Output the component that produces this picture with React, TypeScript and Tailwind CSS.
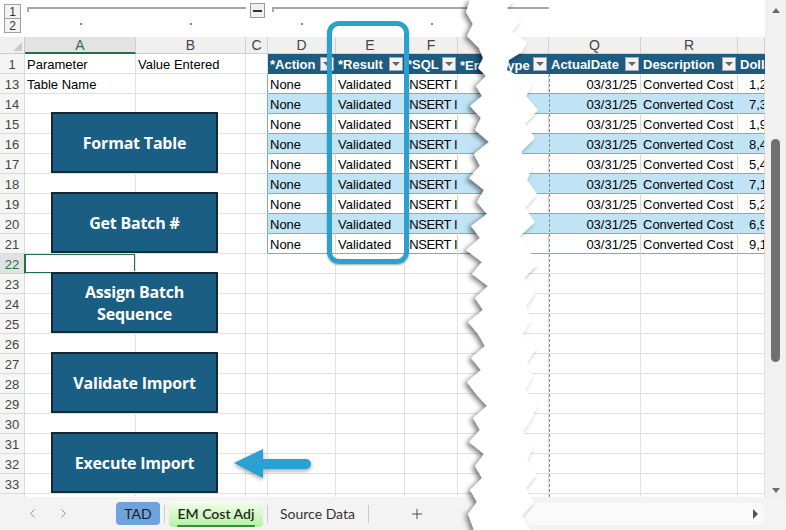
import { ChevronLeft, ChevronRight, Plus } from 'lucide-react'

// column template shared by the outline bar, the column letters and the rows
const GRID = 'grid grid-cols-[25px_111px_110px_22px_68px_69px_53px_91px_92px_97px_27px]'

const rows = [1, 13, 14, 15, 16, 17, 18, 19, 20, 21, 22, 23, 24, 25, 26, 27, 28, 29, 30, 31, 32, 33, 34]

const amounts: Record<number, string> = {
  13: '1,284.50',
  14: '7,310.00',
  15: '1,905.25',
  16: '8,442.10',
  17: '5,467.80',
  18: '7,125.00',
  19: '5,298.40',
  20: '6,973.15',
  21: '9,150.60',
}

const buttons = ['Format Table', 'Get Batch #', 'Assign Batch Sequence', 'Validate Import', 'Execute Import']

// torn paper edge, left side top->bottom, right side bottom->top
const leftEdge = [
  [470, 0], [466, 12], [473, 24], [467, 36], [479, 48], [483, 58], [478, 68], [486, 76], [476, 86], [482, 96],
  [470, 106], [481, 118], [475, 130], [489, 142], [474, 154], [480, 166], [469, 178], [484, 190], [477, 202],
  [487, 214], [471, 226], [480, 238], [466, 250], [482, 262], [472, 274], [488, 286], [475, 298], [483, 310],
  [468, 322], [478, 334], [485, 346], [471, 358], [481, 370], [467, 382], [476, 394], [487, 406], [473, 418],
  [480, 430], [469, 442], [484, 454], [475, 466], [482, 478], [470, 490], [477, 502], [468, 514], [474, 530],
]
const rightEdge = [
  [530, 530], [522, 516], [534, 502], [526, 488], [537, 474], [527, 460], [535, 446], [523, 432], [532, 418],
  [538, 404], [525, 390], [533, 376], [527, 362], [537, 348], [523, 334], [531, 320], [526, 306], [536, 292],
  [524, 278], [538, 264], [529, 250], [520, 236], [535, 222], [525, 208], [537, 194], [527, 180], [533, 166],
  [521, 152], [535, 138], [525, 124], [538, 110], [526, 96], [533, 84], [519, 76], [507, 70], [509, 60],
  [522, 52], [527, 42], [512, 32], [521, 20], [507, 8], [516, 0],
]
const tearPath =
  'M' + [...leftEdge, ...rightEdge].map(([x, y]) => `${x} ${y}`).join(' L') + ' Z'

const Drop = () => (
  <span className="ml-auto mr-[2px] flex h-[14px] w-[14px] shrink-0 items-center justify-center border border-[#A6A6A6] bg-[#F2F2F2]">
    <span className="h-0 w-0 border-x-[4px] border-t-[4px] border-x-transparent border-t-[#666]" />
  </span>
)

const Head = ({ label, drop = true }: { label: string; drop?: boolean }) => (
  <div className="flex h-[20px] items-center overflow-hidden whitespace-nowrap border-b border-[#1D5B80] bg-[#1D5B80] pl-[2px] text-[13px] font-bold text-white">
    <span className="pt-[3px]">{label}</span>
    {drop && <Drop />}
  </div>
)

const DataRow = ({ r }: { r: number }) => {
  const blue = r % 2 === 0
  const cell = blue
    ? 'flex h-[20px] items-center overflow-hidden whitespace-nowrap border-b border-r border-b-[#67B2DE] border-r-[#C0E4F5] bg-[#C0E4F5] pt-[3px] text-[13px] text-black'
    : 'flex h-[20px] items-center overflow-hidden whitespace-nowrap border-b border-r border-b-[#67B2DE] border-r-[#DADADA] bg-white pt-[3px] text-[13px] text-black'
  return (
    <>
      <div className={cell + ' pl-[2px]'}>None</div>
      <div className={cell + ' pl-[2px]'}>Validated</div>
      <div className={cell + ' pl-[1px] tracking-[-0.4px]'}>INSERT INTO</div>
      <div className={cell} />
      <div className={cell + ' justify-end pr-[3px]'}>03/31/25</div>
      <div className={cell + ' pl-[2px]'}>Converted Cost</div>
      <div className={cell + ' pl-[11px]'}>{amounts[r]}</div>
    </>
  )
}

const Row = ({ r }: { r: number }) => {
  const table = r >= 13 && r <= 21
  const plain = 'h-[20px] border-b border-r border-[#E1E1E1] flex items-center overflow-hidden whitespace-nowrap pl-[2px] pt-[3px] text-[13px] text-black'
  return (
    <>
      <div
        className={
          r === 22
            ? 'flex h-[20px] items-center justify-center border-b border-r border-[#D0D0D0] border-r-[#217346] bg-[#E1E1E1] pt-[3px] text-[13px] text-[#217346]'
            : 'flex h-[20px] items-center justify-center border-b border-r border-[#DADADA] bg-[#F5F5F5] pt-[3px] text-[13px] text-[#444]'
        }
      >
        {r}
      </div>
      <div className={plain + ' relative'}>
        {r === 1 ? 'Parameter' : r === 13 ? 'Table Name' : ''}
        {r === 22 && (
          <>
            <div className="absolute -left-px -top-px h-[21px] w-[112px] border-2 border-[#217346]" />
            <div className="absolute -bottom-[3px] -right-[3px] h-[5px] w-[5px] border border-white bg-[#217346]" />
          </>
        )}
      </div>
      <div className={plain}>{r === 1 ? 'Value Entered' : ''}</div>
      <div className={table ? plain + ' border-r-[#67B2DE]' : plain} />
      {r === 1 ? (
        <>
          <Head label="*Action" />
          <Head label="*Result" />
          <Head label="*SQL" />
          <div className="flex h-[20px] items-center overflow-hidden whitespace-nowrap bg-[#1D5B80] pl-[2px] text-[13px] font-bold text-white">
            <span className="pt-[3px]">*Error</span>
            <span className="ml-auto pt-[3px]">Type</span>
            <Drop />
          </div>
          <Head label="ActualDate" />
          <Head label="Description" />
          <Head label="Dollar Amount" drop={false} />
        </>
      ) : table ? (
        <DataRow r={r} />
      ) : (
        <>
          <div className={plain} />
          <div className={plain} />
          <div className={plain} />
          <div className={plain} />
          <div className={plain} />
          <div className={plain} />
          <div className={plain} />
        </>
      )}
    </>
  )
}

const letters = ['', 'A', 'B', 'C', 'D', 'E', 'F', '', 'Q', 'R', '']

export default function App() {
  return (
    <div className="relative flex h-[530px] w-[786px] flex-col overflow-hidden bg-white font-['Liberation_Sans',Arial,sans-serif]">
      <div className="flex h-[497px]">
        <div className="flex w-[765px] flex-col">
          {/* outline bar */}
          <div className={GRID + ' h-[37px] grid-rows-[18px_19px]'}>
            <div className="row-span-2 flex flex-col pl-[4px] pt-[4px]">
              <span className="flex h-[15px] w-[17px] items-center justify-center border border-[#A0A0A0] bg-[#F3F3F3] text-[12px] leading-none text-[#333]">1</span>
              <span className="-mt-px flex h-[15px] w-[17px] items-center justify-center border border-[#A0A0A0] bg-[#F3F3F3] text-[12px] leading-none text-[#333]">2</span>
            </div>
            <div className="col-span-2 pl-[2px] pt-[7px]">
              <div className="h-[5px] border-l-2 border-t-2 border-[#A6A6A6]" />
            </div>
            <div className="pl-[4px] pt-[3px]">
              <div className="flex h-[15px] w-[15px] items-center justify-center border border-[#9A9A9A] bg-[#F0F0F0]">
                <span className="h-[2px] w-[9px] bg-[#333]" />
              </div>
            </div>
            <div className="col-span-4 pl-[4px] pt-[7px]">
              <div className="h-[5px] border-l-2 border-t-2 border-[#A6A6A6]" />
            </div>
            <div className="col-span-3" />
            <div className="flex justify-center pt-[5px]"><span className="h-[2px] w-[2px] bg-[#888]" /></div>
            <div className="flex justify-center pt-[5px]"><span className="h-[2px] w-[2px] bg-[#888]" /></div>
            <div />
            <div className="flex justify-center pt-[5px]"><span className="h-[2px] w-[2px] bg-[#888]" /></div>
            <div />
            <div className="flex justify-center pt-[5px]"><span className="h-[2px] w-[2px] bg-[#888]" /></div>
          </div>

          {/* sheet */}
          <div className="h-[460px] overflow-hidden">
            <div className={GRID}>
              {letters.map((l, i) =>
                i === 0 ? (
                  <div key={i} className="relative h-[17px] border-b border-r border-[#C8C8C8] bg-[#F0F0F0]">
                    <span className="absolute bottom-[2px] right-[2px] h-0 w-0 border-b-[9px] border-l-[9px] border-b-[#C9C9C9] border-l-transparent" />
                  </div>
                ) : (
                  <div
                    key={i}
                    className={
                      l === 'A'
                        ? 'flex h-[17px] items-center justify-center border-b-2 border-r border-b-[#217346] border-r-[#D0D0D0] bg-[#E3E3E3] pt-[1px] text-[14px] text-[#217346]'
                        : 'flex h-[17px] items-center justify-center border-b border-r border-[#D0D0D0] bg-[#F0F0F0] pt-[1px] text-[14px] text-[#444]'
                    }
                  >
                    {l}
                  </div>
                ),
              )}
              {rows.map((r) => (
                <Row key={r} r={r} />
              ))}
            </div>
          </div>
        </div>

        {/* vertical scrollbar */}
        <div className="flex w-[21px] flex-col items-center bg-[#F1F1F1] pb-[4px] pt-[8px]">
          <span className="h-0 w-0 border-x-[4px] border-b-[5px] border-x-transparent border-b-[#6B6B6B]" />
          <div className="mt-[126px] h-[223px] w-[9px] rounded-full bg-[#707070]" />
          <div className="flex-1" />
          <span className="h-0 w-0 border-x-[4px] border-t-[5px] border-x-transparent border-t-[#6B6B6B]" />
        </div>
      </div>

      {/* sheet tabs */}
      <div className="flex h-[33px] items-center bg-[#F3F3F3] font-['Lato',sans-serif] text-[14px]">
        <ChevronLeft className="ml-[25px] text-[#8C8C8C]" size={15} strokeWidth={1.5} />
        <ChevronRight className="ml-[16px] text-[#8C8C8C]" size={15} strokeWidth={1.5} />
        <div className="ml-[45px] flex h-[23px] w-[44px] items-center justify-center rounded-[4px] bg-[#6FA3DE] text-[#1B1B1B]">TAD</div>
        <span className="mx-[4px] h-[18px] w-px bg-[#CACACA]" />
        <div className="flex h-[26px] w-[94px] flex-col items-center justify-center rounded-[4px] bg-gradient-to-b from-[#F4FFEE] to-[#B6EFA0] pt-[2px] font-semibold text-[#1E2E1E]">
          EM Cost Adj
          <span className="mt-[1px] h-[3px] w-[78px] rounded-full bg-[#2F8F3A]" />
        </div>
        <span className="mx-[4px] h-[18px] w-px bg-[#CACACA]" />
        <div className="ml-[8px] w-[88px] text-[#333]">Source Data</div>
        <span className="h-[18px] w-px bg-[#CACACA]" />
        <Plus className="ml-[40px] text-[#444]" size={16} strokeWidth={1.4} />
        <div className="ml-[40px] flex h-[22px] flex-1 items-center justify-end rounded-[6px] bg-[#FAFAFA] pr-[6px]">
          <span className="h-0 w-0 border-y-[5px] border-l-[5px] border-y-transparent border-l-[#555]" />
        </div>
        <div className="w-[22px]" />
      </div>

      {/* shapes floating over the sheet */}
      <div className="absolute left-[51px] top-[112px] flex flex-col gap-[19px] font-['Open_Sans',sans-serif]">
        {buttons.map((b) => (
          <div
            key={b}
            className="flex h-[61px] w-[167px] items-center justify-center border-2 border-[#0E2A3C] bg-[#1A5E84] px-[22px] text-center text-[16px] font-bold leading-[22px] tracking-[-0.2px] text-white"
          >
            <span className={b === 'Validate Import' || b === 'Execute Import' ? 'whitespace-nowrap' : ''}>{b}</span>
          </div>
        ))}
      </div>

      <div className="pointer-events-none absolute left-[327px] top-[21px] h-[243px] w-[82px] rounded-[12px] border-[5px] border-[#29A1D3] shadow-[0_1px_2px_rgba(0,0,0,0.35)]" />

      <div className="pointer-events-none absolute left-[549px] top-[74px] h-[423px] border-l border-dashed border-[#8C8C8C]" />

      <svg className="pointer-events-none absolute left-[232px] top-[446px] drop-shadow-[0_2px_2px_rgba(0,0,0,0.35)]" width="82" height="36" viewBox="0 0 82 36">
        <path d="M2 17 L31 3 L31 13 L74 13 A5 5 0 0 1 74 23 L31 23 L31 32 Z" fill="#29A1D3" />
      </svg>

      <svg className="pointer-events-none absolute left-0 top-0" width="786" height="530" viewBox="0 0 786 530">
        <defs>
          <filter id="tear" x="-20%" y="-5%" width="140%" height="110%">
            <feDropShadow dx="-3" dy="2" stdDeviation="2.5" floodColor="#000" floodOpacity="0.5" />
          </filter>
        </defs>
        <path d={tearPath} fill="#fff" filter="url(#tear)" />
      </svg>
    </div>
  )
}
